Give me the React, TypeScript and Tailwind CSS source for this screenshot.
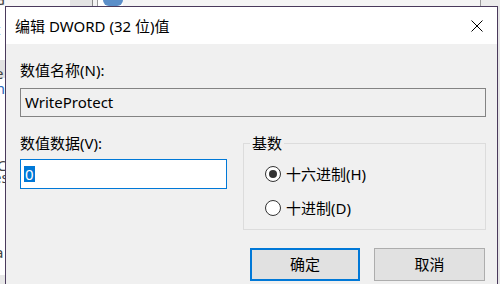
import React from "react";

function CloseIcon() {
  return (
    <svg width="12" height="12" viewBox="0 0 12 12" className="block">
      <path d="M0.5 0.5 L11.5 11.5 M11.5 0.5 L0.5 11.5" stroke="#000" strokeWidth="1" fill="none" />
    </svg>
  );
}

function Radio({ checked, label }: { checked: boolean; label: string }) {
  return (
    <div className="flex items-center h-[20px] pl-[21px]">
      <div className="w-[16px] h-[16px] rounded-full border border-[#333] bg-white flex items-center justify-center">
        {checked && <div className="w-[8px] h-[8px] rounded-full bg-[#333]" />}
      </div>
      <span className="ml-[5px] text-[15px] leading-[20px] text-black">{label}</span>
    </div>
  );
}

export default function App() {
  return (
    <div className="relative w-[500px] h-[284px] overflow-hidden bg-white font-['Noto_Sans','Noto_Sans_CJK_SC',sans-serif]">
      {/* background window fragments */}
      <div className="absolute left-0 top-0 w-[500px] h-[6px] flex">
        <div className="w-[70px] h-full bg-[#f7f7f7]" />
        <div className="w-[22px] h-full bg-[#e4e4e4]" />
        <div className="w-[1px] h-full bg-[#8a8a8a]" />
        <div className="w-[4px] h-full bg-[#f2f2f2]" />
        <div className="w-[1px] h-full bg-[#9a9a9a]" />
        <div className="w-[5px] h-full bg-white" />
        <div className="w-[20px] h-full bg-[#5b8fc9] rounded-b-[6px]" />
        <div className="w-[357px] h-full bg-[#f5f5f5]" />
        <div className="w-[1px] h-full bg-[#9a9a9a]" />
        <div className="flex-1 h-full bg-[#ececec]" />
      </div>
      <div className="absolute left-0 top-[6px] w-[5px] h-[278px] flex flex-col overflow-hidden">
        <div className="h-[54px] bg-white" />
        <div className="h-[18px] bg-[#e2e2e2]" />
        <div className="flex-1 bg-white" />
        <div className="h-[9px] bg-[#e8e8e8]" />
      </div>
      <div className="absolute left-[-6px] top-[-6px] text-[15px] leading-[11px] text-[#444]">G</div>
      <div className="absolute left-[-5px] top-[22px] text-[15px] leading-[15px] text-[#444]">t</div>
      <div className="absolute left-[-9px] top-[51px] text-[15px] leading-[15px] text-[#444] whitespace-pre">{"n\n"}<span className="pl-[4px]">e</span>{"\n"}<span className="text-[#2a6bbf]">m</span></div>
      <div className="absolute left-[-7px] top-[159px] text-[15px] leading-[12px] text-[#444] whitespace-pre">{" C\nes"}</div>
      <div className="absolute left-[-5px] top-[245px] text-[15px] leading-[15px] text-[#444]">a</div>
      <div className="absolute left-[498px] top-[6px] w-[2px] h-[278px] bg-[#e6e6e6]" />

      {/* dialog */}
      <div className="absolute left-[5px] top-[6px] w-[493px] h-[279px] border border-[#4a3a5c] bg-[#f0f0f0] flex flex-col">
        <div className="h-[37px] bg-white flex items-center pl-[9px] pr-[14px] shrink-0">
          <span className="text-[15px] leading-[20px] text-black">编辑 DWORD (32 位)值</span>
          <div className="ml-auto">
            <CloseIcon />
          </div>
        </div>
        <div className="flex flex-col pl-[14px] pr-[11px] pt-[16px]">
          <div className="text-[15px] leading-[20px] text-black">数值名称(N):</div>
          <div className="mt-[8px] h-[29px] border border-[#838383] bg-[#f0f0f0] flex items-center pl-[4px] text-[15px] text-black">
            WriteProtect
          </div>
          <div className="mt-[16px] flex">
            <div className="w-[207px] flex flex-col">
              <div className="text-[15px] leading-[20px] text-black">数值数据(V):</div>
              <div className="mt-[6px] h-[30px] border border-[#0078d7] bg-white flex items-center pl-[3px]">
                <span className="bg-[#0078d7] text-white text-[15px] leading-[16px] h-[16px] px-[1px]">0</span>
              </div>
            </div>
            <div className="ml-[16px] flex-1 mt-[10px] relative h-[87px] border border-[#dcdcdc]">
              <div className="absolute left-[6px] top-[-11px] px-[2px] bg-[#f0f0f0] text-[15px] leading-[20px] text-black">基数</div>
              <div className="flex flex-col pt-[20px] gap-[14px]">
                <Radio checked={true} label="十六进制(H)" />
                <Radio checked={false} label="十进制(D)" />
              </div>
            </div>
          </div>
          <div className="mt-[18px] flex justify-end gap-[14px] pr-[1px]">
            <button className="w-[110px] h-[33px] border-2 border-[#0078d7] bg-[#e1e1e1] text-[15px] text-black flex items-center justify-center">确定</button>
            <button className="w-[111px] h-[33px] border border-[#adadad] bg-[#e1e1e1] text-[15px] text-black flex items-center justify-center">取消</button>
          </div>
        </div>
      </div>
    </div>
  );
}
